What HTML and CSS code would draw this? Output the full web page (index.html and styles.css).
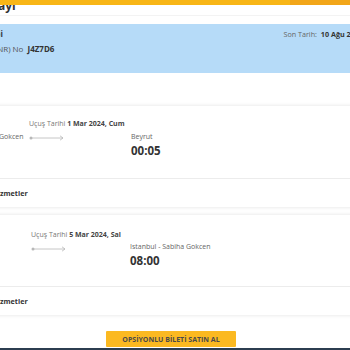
FILE: index.html
```html
<!DOCTYPE html>
<html lang="tr">
<head>
  <meta charset="UTF-8">
  <meta name="viewport" content="width=device-width, initial-scale=1.0">
  <title>Rezervasyon Detayı</title>
  <link rel="stylesheet" href="styles.css">
</head>
<body>

  <!-- sticky header edge, sits over the scrolled content -->
  <div class="topbar">
    <div class="topbar-main"></div>
    <div class="topbar-side"></div>
  </div>

  <div class="page">
    <h1 class="page-title">Rezervasyon Detayı</h1>

    <!-- Reservation info -->
    <div class="info-box">
      <div class="info-left">
        <div class="info-title">Opsiyon Talebi</div>
        <div class="info-pnr">Rezervasyon (PNR) No <b>J4Z7D6</b></div>
      </div>
      <div class="info-right">Son Tarih: <b>10 Ağu 2024</b></div>
    </div>

    <!-- Outbound flight -->
    <div class="flight-card">
      <div class="flight">
        <div class="point point-from">
          <div class="city">Istanbul - Sabiha Gokcen</div>
          <div class="time">21:45</div>
        </div>
        <div class="route">
          <div class="route-date">Uçuş Tarihi <b>1 Mar 2024, Cum</b></div>
          <svg class="route-arrow" width="36" height="6" viewBox="0 0 36 6">
            <circle cx="2" cy="3" r="1.5" fill="#b8b8b8"/>
            <line x1="2" y1="3" x2="34" y2="3" stroke="#b8b8b8" stroke-width="0.8"/>
            <polyline points="31,0.8 34,3 31,5.2" fill="none" stroke="#b8b8b8" stroke-width="0.8"/>
          </svg>
        </div>
        <div class="point point-to">
          <div class="city">Beyrut</div>
          <div class="time">00:05</div>
        </div>
      </div>
      <div class="services">Ek Hizmetler</div>
    </div>

    <!-- Return flight -->
    <div class="flight-card">
      <div class="flight flight-return">
        <div class="point point-from">
          <div class="city">Beyrut</div>
          <div class="time">05:10</div>
        </div>
        <div class="route">
          <div class="route-date">Uçuş Tarihi <b>5 Mar 2024, Sal</b></div>
          <svg class="route-arrow" width="36" height="6" viewBox="0 0 36 6">
            <circle cx="2" cy="3" r="1.5" fill="#b8b8b8"/>
            <line x1="2" y1="3" x2="34" y2="3" stroke="#b8b8b8" stroke-width="0.8"/>
            <polyline points="31,0.8 34,3 31,5.2" fill="none" stroke="#b8b8b8" stroke-width="0.8"/>
          </svg>
        </div>
        <div class="point point-to">
          <div class="city">Istanbul - Sabiha Gokcen</div>
          <div class="time">08:00</div>
        </div>
      </div>
      <div class="services">Ek Hizmetler</div>
    </div>

    <div class="actions">
      <button class="buy-button">OPSİYONLU BİLETİ SATIN AL</button>
    </div>
  </div>

  <div class="footer"></div>

</body>
</html>
```

FILE: styles.css
```css
body {
  font-family: "Open Sans", Arial, sans-serif;
  background-color: #fff;
  color: #333;
  margin: 0;
  padding: 0;
  width: 350px;
  height: 350px;
  overflow: hidden;
  position: relative;
}

.topbar {
  position: absolute;
  top: 0;
  left: 0;
  right: 0;
  height: 5px;
  display: flex;
  z-index: 2;
}

.topbar-main {
  flex: 1;
  background-color: #f8b617;
}

.topbar-side {
  width: 60px;
  background-color: #f2a619;
}

.page {
  margin-left: -110px;
  width: 490px;
}

.page-title {
  margin: 0 0 8px 0;
  padding: 0 0 3px 8px;
  font-size: 12px;
  line-height: 12px;
  font-weight: bold;
  color: #333;
  border-bottom: 1px solid #f3f3f3;
}

.info-box {
  display: flex;
  justify-content: space-between;
  background-color: #b6dbf8;
  padding: 3px 17px 17px 51px;
  height: 29px;
}

.info-title {
  padding-left: 3px;
  font-size: 8px;
  line-height: 14.5px;
  font-weight: bold;
  color: #333;
}

.info-pnr {
  font-size: 8px;
  line-height: 14.5px;
  color: #555;
}

.info-pnr b {
  color: #333;
  margin-left: 2px;
}

.info-right {
  font-size: 7.2px;
  line-height: 14.5px;
  color: #666;
}

.info-right b {
  color: #333;
  margin-left: 2px;
}

.flight-card {
  background-color: #fff;
  box-shadow: 0px 0px 4px rgba(0, 0, 0, 0.12);
  margin-bottom: 8px;
}

.page > .info-box + .flight-card {
  margin-top: 33px;
}

.flight {
  display: flex;
  align-items: flex-start;
  padding: 13px 16px 20px 53px;
}

.flight-return {
  padding-top: 15px;
  padding-bottom: 18px;
}

.point {
  margin-top: 13px;
}

.flight-return .point {
  margin-top: 12px;
}

.point-from {
  width: 79px;
  margin-right: 7px;
}

.city {
  font-size: 7px;
  line-height: 10px;
  color: #666;
  white-space: nowrap;
}

.time {
  margin-top: 2px;
  font-size: 11.5px;
  line-height: 14px;
  font-weight: bold;
  color: #333;
}

.route {
  width: 94px;
  margin-right: 8px;
}

.flight-return .route {
  margin-left: 2px;
  margin-right: 5px;
}

.route-date {
  font-size: 7px;
  line-height: 10px;
  color: #777;
  white-space: nowrap;
}

.route-date b {
  color: #444;
}

.route-arrow {
  display: block;
  margin-top: 6px;
}

.services {
  border-top: 1px solid #ececec;
  padding-left: 92px;
  font-size: 7.2px;
  line-height: 28px;
  font-weight: bold;
  color: #333;
}

.actions {
  padding-top: 8px;
  padding-left: 216px;
}

.buy-button {
  display: block;
  width: 130px;
  height: 16px;
  padding: 0;
  border: none;
  border-radius: 1px;
  background-color: #fbb921;
  font-family: "Open Sans", Arial, sans-serif;
  font-size: 7px;
  font-weight: bold;
  color: #4a4a4a;
  cursor: pointer;
}

.footer {
  margin-top: 1px;
  height: 10px;
  background-color: #2c3e50;
}
```
